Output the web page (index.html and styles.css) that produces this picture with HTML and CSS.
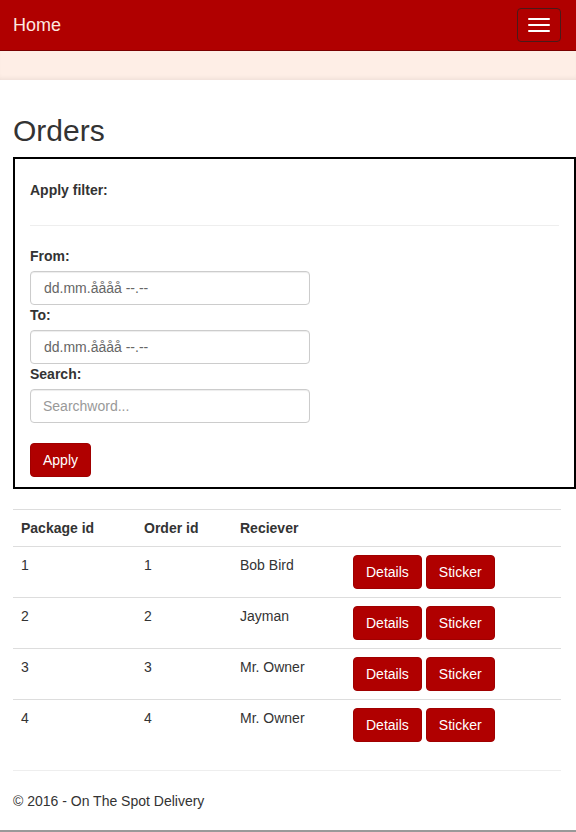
FILE: index.html
```html
<!DOCTYPE html>
<html>
<head>
<meta charset="utf-8">
<title>Orders</title>
<link rel="stylesheet" href="styles.css">
</head>
<body>
<nav class="navbar">
  <a class="brand" href="#">Home</a>
  <button class="toggle" type="button" aria-label="Menu">
    <span class="bar"></span><span class="bar"></span><span class="bar"></span>
  </button>
</nav>
<div class="strip"></div>
<main class="container">
  <h2 class="title">Orders</h2>
  <form class="filter">
    <div class="filter-head">Apply filter:</div>
    <hr class="filter-rule">
    <label class="lbl">From:</label>
    <input class="field date" type="text" value="dd.mm.åååå --.--">
    <label class="lbl">To:</label>
    <input class="field date" type="text" value="dd.mm.åååå --.--">
    <label class="lbl">Search:</label>
    <input class="field" type="text" placeholder="Searchword...">
    <div class="actions"><button class="btn" type="button">Apply</button></div>
  </form>
  <table class="orders">
    <thead>
      <tr><th class="c1">Package id</th><th class="c2">Order id</th><th class="c3">Reciever</th><th class="c4"></th></tr>
    </thead>
    <tbody>
      <tr><td>1</td><td>1</td><td>Bob Bird</td><td class="btns"><button class="btn" type="button">Details</button><button class="btn" type="button">Sticker</button></td></tr>
      <tr><td>2</td><td>2</td><td>Jayman</td><td class="btns"><button class="btn" type="button">Details</button><button class="btn" type="button">Sticker</button></td></tr>
      <tr><td>3</td><td>3</td><td>Mr. Owner</td><td class="btns"><button class="btn" type="button">Details</button><button class="btn" type="button">Sticker</button></td></tr>
      <tr><td>4</td><td>4</td><td>Mr. Owner</td><td class="btns"><button class="btn" type="button">Details</button><button class="btn" type="button">Sticker</button></td></tr>
    </tbody>
  </table>
  <hr class="foot-rule">
  <footer class="footer">© 2016 - On The Spot Delivery</footer>
</main>
<div class="page-end"></div>
</body>
</html>
```

FILE: styles.css
```css
* { box-sizing: border-box; }
html, body { margin: 0; padding: 0; }
body {
  font-family: "Liberation Sans", Arial, sans-serif;
  font-size: 14px;
  line-height: 20px;
  color: #333;
  background: #fff;
  overflow: hidden;
}
.navbar {
  height: 51px;
  background: #b00000;
  border-bottom: 1px solid #7a0000;
  display: flex;
  align-items: flex-start;
  justify-content: space-between;
}
.brand {
  padding: 15px 13px;
  font-size: 18px;
  line-height: 20px;
  color: #fde8e0;
  text-decoration: none;
}
.toggle {
  margin: 8px 15px 0 0;
  width: 44px;
  height: 34px;
  padding: 9px 10px;
  background: transparent;
  border: 1px solid #4a1a1a;
  border-radius: 4px;
  display: flex;
  flex-direction: column;
  justify-content: space-between;
  align-items: center;
}
.bar {
  display: block;
  width: 22px;
  height: 2px;
  background: #fff;
  border-radius: 1px;
}
.strip {
  height: 29px;
  background: #feeee6;
  box-shadow: inset 0 -4px 5px -3px rgba(0,0,0,0.08);
}
.container {
  padding: 14px 15px 0 13px;
}
.title {
  margin: 20px 0 10px;
  font-size: 30px;
  line-height: 33px;
  font-weight: 500;
  color: #333;
}
.filter {
  margin-right: -15px;
  border: 2px solid #000;
  padding: 21px 15px 10px;
  display: flex;
  flex-direction: column;
  align-items: flex-start;
}
.filter-head {
  font-weight: bold;
  line-height: 20px;
}
.filter-rule {
  align-self: stretch;
  margin: 25px 0 20px;
  border: 0;
  border-top: 1px solid #eee;
}
.lbl {
  display: block;
  font-weight: bold;
  line-height: 20px;
  margin-bottom: 5px;
}
.field {
  width: 280px;
  height: 34px;
  padding: 6px 12px;
  font-family: "Liberation Sans", Arial, sans-serif;
  font-size: 14px;
  color: #555;
  border: 1px solid #ccc;
  border-radius: 4px;
  box-shadow: inset 0 1px 1px rgba(0,0,0,0.075);
  background: #fff;
  margin: 0;
}
.field.date { padding-left: 13px; color: #666; }
.field::placeholder { color: #999; }
.actions { margin-top: 20px; }
.btn {
  display: inline-block;
  height: 34px;
  padding: 6px 12px;
  font-family: "Liberation Sans", Arial, sans-serif;
  font-size: 14px;
  line-height: 20px;
  color: #fff;
  background: #b00000;
  border: 1px solid #a00000;
  border-radius: 4px;
  margin: 0;
}
.orders {
  width: 100%;
  margin-top: 20px;
  border-collapse: collapse;
  border-top: 1px solid #ddd;
}
.orders th, .orders td {
  padding: 8px;
  text-align: left;
  vertical-align: top;
  line-height: 20px;
}
.orders th { font-weight: bold; border-bottom: 1px solid #ddd; }
.orders tbody tr + tr td { border-top: 1px solid #ddd; }
.c1 { width: 123px; }
.c2 { width: 96px; }
.c3 { width: 113px; }
.btns { display: flex; gap: 4px; }
.foot-rule {
  margin: 20px 0 20px;
  border: 0;
  border-top: 1px solid #eee;
}
.footer {
  line-height: 20px;
  padding-bottom: 19px;
}
.page-end {
  border-top: 2px solid #999;
  height: 10px;
}
```
